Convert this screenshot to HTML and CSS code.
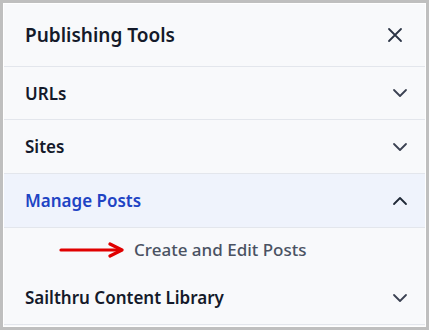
FILE: index.html
```html
<!DOCTYPE html>
<html>
<head>
<meta charset="utf-8">
<link rel="stylesheet" href="styles.css">
</head>
<body>
<div class="frame">
  <div class="panel">
    <div class="header">
      <h1 class="title">Publishing Tools</h1>
      <svg class="close" width="16" height="16" viewBox="0 0 16 16"><path d="M2 2 L14 14 M14 2 L2 14" stroke="#2b3445" stroke-width="1.8" fill="none" stroke-linecap="round"/></svg>
    </div>
    <div class="row r1">
      <span class="label">URLs</span>
      <svg class="chev" width="16" height="10" viewBox="0 0 16 10"><path d="M2 2 L8 8 L14 2" stroke="#3b4252" stroke-width="1.8" fill="none" stroke-linecap="round" stroke-linejoin="round"/></svg>
    </div>
    <div class="row">
      <span class="label">Sites</span>
      <svg class="chev" width="16" height="10" viewBox="0 0 16 10"><path d="M2 2 L8 8 L14 2" stroke="#3b4252" stroke-width="1.8" fill="none" stroke-linecap="round" stroke-linejoin="round"/></svg>
    </div>
    <div class="row active">
      <span class="label">Manage Posts</span>
      <svg class="chev" width="16" height="10" viewBox="0 0 16 10"><path d="M2 8 L8 2 L14 8" stroke="#1f2937" stroke-width="1.8" fill="none" stroke-linecap="round" stroke-linejoin="round"/></svg>
    </div>
    <div class="sub">
      <svg class="arrow" width="68" height="16" viewBox="0 0 68 16"><path d="M3 8 H63" stroke="#e00000" stroke-width="3.2" stroke-linecap="round"/><path d="M52 2 L64 8 L52 14" stroke="#e00000" stroke-width="3.2" fill="none" stroke-linecap="round" stroke-linejoin="round"/></svg>
      <span class="sublabel">Create and Edit Posts</span>
    </div>
    <div class="row last">
      <span class="label">Sailthru Content Library</span>
      <svg class="chev" width="16" height="10" viewBox="0 0 16 10"><path d="M2 2 L8 8 L14 2" stroke="#3b4252" stroke-width="1.8" fill="none" stroke-linecap="round" stroke-linejoin="round"/></svg>
    </div>
  </div>
</div>
</body>
</html>
```
FILE: styles.css
```css
html, body {
  margin: 0;
  padding: 0;
  background: #bfbfbf;
}
.frame {
  width: 429px;
  height: 330px;
  box-sizing: border-box;
  border: 3px solid #bfbfbf;
}
.panel {
  box-sizing: border-box;
  height: 324px;
  border: 1px solid #ffffff;
  background: #f8f9fb;
  font-family: "Noto Sans", "Open Sans", sans-serif;
  display: flex;
  flex-direction: column;
  overflow: hidden;
}
.header {
  height: 63px;
  flex: none;
  box-sizing: border-box;
  border-bottom: 1px solid #e3e6ec;
  display: flex;
  align-items: center;
  justify-content: space-between;
  padding: 0 22px 0 21px;
}
.title {
  margin: 0;
  font-size: 19px;
  font-weight: 600;
  color: #141a2a;
}
.close {
  display: block;
}
.row {
  height: 54px;
  flex: none;
  box-sizing: border-box;
  border-bottom: 1px solid #e3e6ec;
  display: flex;
  align-items: center;
  justify-content: space-between;
  padding: 0 17px 0 21px;
}
.row.r1 {
  height: 53px;
}
.row.active {
  background: #eff3fc;
}
.row.active .label {
  color: #2043c4;
}
.label {
  font-size: 17px;
  font-weight: 600;
  color: #141a2a;
}
.chev {
  display: block;
}
.sub {
  height: 43px;
  flex: none;
  display: flex;
  align-items: center;
  padding-left: 54px;
  gap: 8px;
}
.arrow {
  display: block;
}
.sublabel {
  font-size: 17px;
  font-weight: 500;
  color: #4a5262;
}
.row.last {
  height: 54px;
}
```
